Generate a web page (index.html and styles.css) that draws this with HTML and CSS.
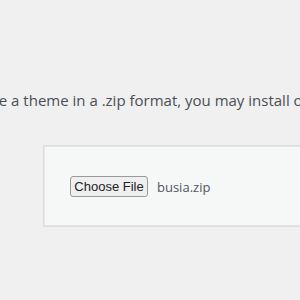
FILE: index.html
```html
<!DOCTYPE html>
<html>
<head>
<meta charset="utf-8">
<link rel="stylesheet" href="styles.css">
</head>
<body>
<div class="page">
  <p class="install-help">If you have a theme in a .zip format, you may install or update it by uploading it here.</p>
  <form class="upload-form">
    <label class="file-input">
      <span class="file-button">Choose File</span>
      <span class="file-name">busia.zip</span>
    </label>
  </form>
</div>
</body>
</html>
```
FILE: styles.css
```css
html, body {
  margin: 0;
  padding: 0;
  background: #f0f0f0;
  width: 300px;
  height: 300px;
  overflow: hidden;
}
.page {
  padding-top: 90px;
  margin-left: -69px;
  width: 800px;
}
.install-help {
  margin: 0;
  font-family: "Open Sans", "Noto Sans", sans-serif;
  font-size: 15px;
  line-height: 20px;
  color: #4a4f55;
  white-space: nowrap;
}
.upload-form {
  margin: 35px 0 0 112px;
  background: #f6f7f7;
  border: 1px solid #dcdcde;
  box-shadow: inset 0 0 0 1px #e6e6e6;
  padding: 30px 26px 29px;
  height: 21px;
}
.file-input {
  display: flex;
  align-items: center;
  gap: 9px;
}
.file-button {
  box-sizing: border-box;
  height: 21px;
  width: 78px;
  display: flex;
  align-items: center;
  justify-content: center;
  font-family: "Liberation Sans", Arial, sans-serif;
  font-size: 13px;
  color: #222;
  background: #efefef;
  border: 1px solid #9a9a9a;
  border-radius: 3px;
}
.file-name {
  font-family: "Open Sans", "Noto Sans", sans-serif;
  font-size: 13px;
  color: #50575e;
}
```
